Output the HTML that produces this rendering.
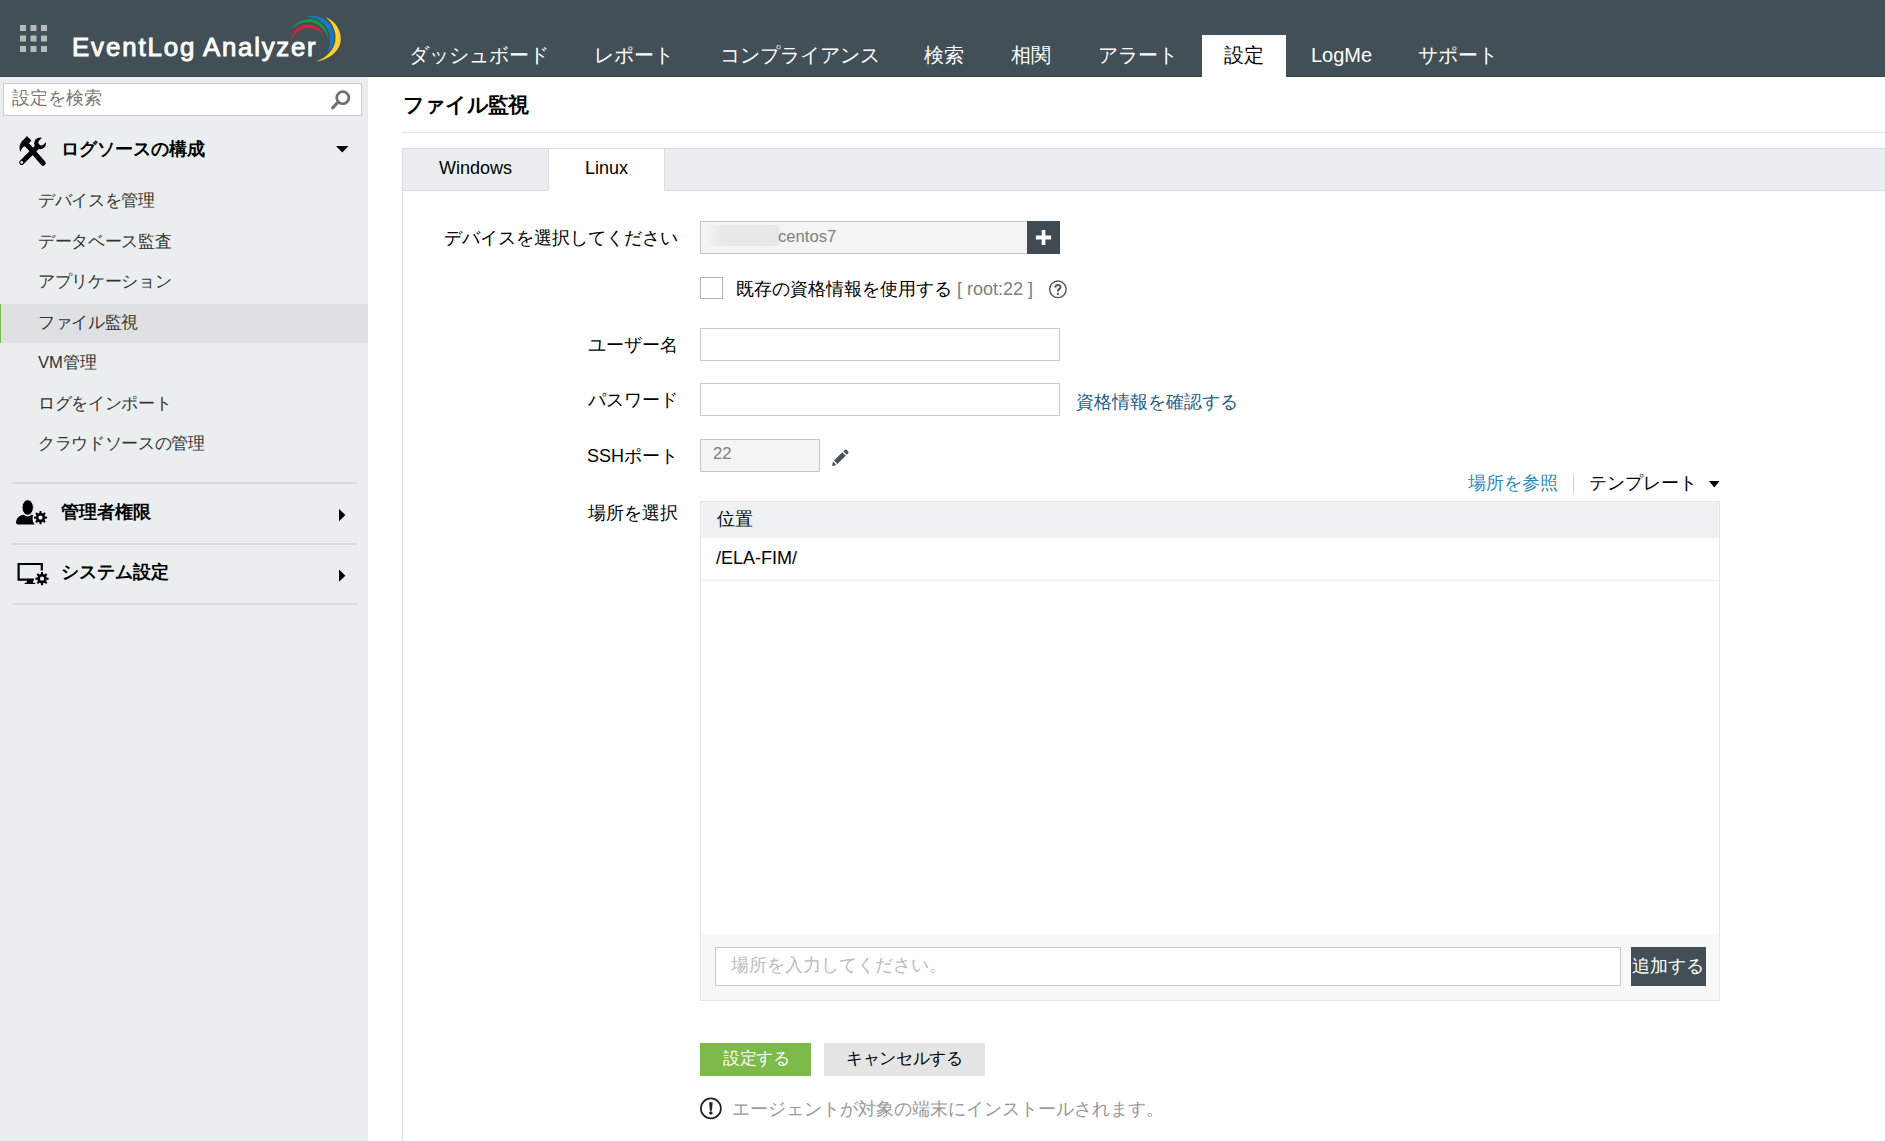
<!DOCTYPE html>
<html lang="ja">
<head>
<meta charset="utf-8">
<title>EventLog Analyzer</title>
<style>
*{box-sizing:border-box;margin:0;padding:0}
html,body{width:1885px;height:1141px;overflow:hidden;background:#fff}
body{position:relative;font-family:"Liberation Sans",sans-serif;color:#000;font-size:18px}
.a{position:absolute}
.t{position:absolute;white-space:nowrap;line-height:24px;height:24px}
.r{text-align:right}
/* header */
#hdr{left:0;top:0;width:1885px;height:77px;background:#424f56;border-bottom:1px solid #38474e}
.nav{color:#fff;font-size:20px;top:43px}
#act{left:1202px;top:35px;width:84px;height:42px;background:#fff}
.lg{top:31px;font-size:25.8px;font-weight:normal;color:#fff;line-height:32px;height:32px;-webkit-text-stroke:0.95px #fff}
/* sidebar */
#side{left:0;top:77px;width:368px;height:1064px;background:#ebeeef}
#srch{left:3px;top:83px;width:359px;height:33px;background:#fff;border:1px solid #ccc}
.sh{font-weight:bold;font-size:18px;color:#000;left:61px}
.si{font-size:16.67px;letter-spacing:-0.33px;color:#333;left:38px}
#sel{left:0;top:304px;width:368px;height:39px;background:#dfe0e2;border-left:1px solid #74b84f}
.hr{left:12px;width:345px;height:2px;background:#d8dbdd}
/* main */
#vline{left:402px;top:148px;width:1px;height:993px;background:#d9dee1}
#tline{left:402px;top:132px;width:1483px;height:1px;background:#e2e4e6}
#tabs{left:402px;top:148px;width:1483px;height:43px;background:#ebeeef;border:1px solid #d9dddf;border-right:0}
#tabL{left:548px;top:148px;width:117px;height:43px;background:#fff;border:1px solid #d9dddf;border-bottom:0}
#tabW{left:548px;top:149px;width:1px;height:41px;background:#d9dddf}
.lbl{font-size:18px;color:#000;left:378px;width:300px;text-align:right}
.inp{background:#fff;border:1px solid #c8c8c8}
.dis{background:#f4f4f4;border:1px solid #c6c6c6}
.g{color:#808080}
</style>
</head>
<body>
<!-- HEADER -->
<div id="hdr" class="a"></div>
<div id="act" class="a"></div>
<div class="t lg" id="lg1" style="left:72px;letter-spacing:1.9px">EventLog</div>
<div class="t lg" id="lg2" style="left:203px;letter-spacing:1.75px">Analyzer</div>
<div class="t nav" style="left:409px">ダッシュボード</div>
<div class="t nav" style="left:594px">レポート</div>
<div class="t nav" style="left:720px">コンプライアンス</div>
<div class="t nav" style="left:924px">検索</div>
<div class="t nav" style="left:1011px">相関</div>
<div class="t nav" style="left:1098px">アラート</div>
<div class="t nav" style="left:1224px;color:#000">設定</div>
<div class="t nav" style="left:1311px">LogMe</div>
<div class="t nav" style="left:1418px">サポート</div>

<!-- SIDEBAR -->
<div id="side" class="a"></div>
<div id="srch" class="a"></div>
<div class="t" style="left:12px;top:86px;font-size:18px;color:#777">設定を検索</div>
<div class="t sh" style="top:137px">ログソースの構成</div>
<div id="sel" class="a"></div>
<div class="t si" style="top:189px">デバイスを管理</div>
<div class="t si" style="top:230px">データベース監査</div>
<div class="t si" style="top:270px">アプリケーション</div>
<div class="t si" style="top:311px">ファイル監視</div>
<div class="t si" style="top:351px"><span style="letter-spacing:0">VM</span>管理</div>
<div class="t si" style="top:392px">ログをインポート</div>
<div class="t si" style="top:432px">クラウドソースの管理</div>
<div class="a hr" style="top:482px"></div>
<div class="t sh" style="top:500px">管理者権限</div>
<div class="a hr" style="top:543px"></div>
<div class="t sh" style="top:560px">システム設定</div>
<div class="a hr" style="top:603px"></div>

<!-- MAIN -->
<div class="t" style="left:403px;top:93px;font-size:20.83px;letter-spacing:-0.83px;font-weight:bold;color:#000">ファイル監視</div>
<div id="tline" class="a"></div>
<div id="vline" class="a"></div>
<div id="tabs" class="a"></div>
<div id="tabL" class="a"></div>
<div class="t" style="left:439px;top:156px;font-size:18px;color:#000">Windows</div>
<div class="t" style="left:585px;top:156px;font-size:18px;color:#000">Linux</div>

<div class="t lbl" style="top:226px">デバイスを選択してください</div>
<div class="a dis" style="left:700px;top:221px;width:328px;height:33px"></div>
<div class="a" style="left:705px;top:225px;width:74px;height:21px;background:linear-gradient(90deg,rgba(232,232,232,0) 0%,#e9e9e9 22%,#e8e8e8 100%)"></div>
<div class="t g" style="left:778px;top:225px;font-size:16.67px">centos7</div>
<div class="a" style="left:1027px;top:221px;width:33px;height:33px;background:#3f4a52"></div>

<div class="a inp" style="left:700px;top:277px;width:23px;height:22px;border-color:#b2b2b2"></div>
<div class="t" style="left:736px;top:277px;font-size:18px;color:#000">既存の資格情報を使用する</div>
<div class="t g" style="left:957px;top:277px;font-size:18px">[ root:22 ]</div>

<div class="t lbl" style="top:333px">ユーザー名</div>
<div class="a inp" style="left:700px;top:328px;width:360px;height:33px"></div>
<div class="t lbl" style="top:388px">パスワード</div>
<div class="a inp" style="left:700px;top:383px;width:360px;height:33px"></div>
<div class="t" style="left:1076px;top:390px;font-size:18px;color:#1f5d88">資格情報を確認する</div>
<div class="t lbl" style="top:444px">SSHポート</div>
<div class="a dis" style="left:700px;top:439px;width:120px;height:33px"></div>
<div class="t g" style="left:713px;top:442px;font-size:16.67px">22</div>

<div class="t" style="left:1468px;top:471px;font-size:18px;color:#2a8abf">場所を参照</div>
<div class="a" style="left:1573px;top:475px;width:1px;height:18px;background:#d0d0d0"></div>
<div class="t" style="left:1589px;top:471px;font-size:18px;color:#000">テンプレート</div>

<div class="t lbl" style="top:501px">場所を選択</div>
<!-- table -->
<div class="a" style="left:700px;top:501px;width:1020px;height:500px;border:1px solid #e7e7e7;background:#fff"></div>
<div class="a" style="left:701px;top:502px;width:1018px;height:36px;background:#eff2f3"></div>
<div class="t" style="left:717px;top:507px;font-size:18px;color:#000">位置</div>
<div class="t" style="left:716px;top:546px;font-size:18px;color:#000">/ELA-FIM/</div>
<div class="a" style="left:701px;top:580px;width:1018px;height:1px;background:#e9ebec"></div>
<div class="a" style="left:701px;top:934px;width:1018px;height:66px;background:#f8f8f8"></div>
<div class="a inp" style="left:715px;top:947px;width:906px;height:39px"></div>
<div class="t" style="left:731px;top:953px;font-size:18px;color:#bbb">場所を入力してください。</div>
<div class="a" style="left:1631px;top:947px;width:75px;height:39px;background:#434e56"></div>
<div class="t" style="left:1631px;top:954px;font-size:18px;color:#fff;width:73px;text-align:center">追加する</div>

<div class="a" style="left:700px;top:1043px;width:111px;height:33px;background:#7dba4a"></div>
<div class="t" style="left:701px;top:1047px;width:111px;text-align:center;font-size:16.67px;letter-spacing:-0.33px;color:#fff">設定する</div>
<div class="a" style="left:824px;top:1043px;width:161px;height:33px;background:#e5e5e5"></div>
<div class="t" style="left:824px;top:1047px;width:161px;text-align:center;font-size:16.67px;letter-spacing:-0.33px;color:#000">キャンセルする</div>
<div class="t" style="left:732px;top:1097px;font-size:18px;color:#999">エージェントが対象の端末にインストールされます。</div>

<!-- ICONS (page coordinates) -->
<svg class="a" style="left:0;top:0" width="1885" height="1141" viewBox="0 0 1885 1141">
<!-- grid -->
<g fill="#b5babd">
<rect x="20" y="25" width="6" height="6"/><rect x="30.5" y="25" width="6" height="6"/><rect x="41" y="25" width="6" height="6"/>
<rect x="20" y="35.5" width="6" height="6"/><rect x="30.5" y="35.5" width="6" height="6"/><rect x="41" y="35.5" width="6" height="6"/>
<rect x="20" y="46" width="6" height="6"/><rect x="30.5" y="46" width="6" height="6"/><rect x="41" y="46" width="6" height="6"/>
</g>
<!-- logo swoosh -->
<path fill="#fdd131" d="M325.5,17 C338,22 342,34 340.5,42 C339,52 328,60 316,61.7 C326,58 334,50 335.3,41 C336.5,32 333,23 325.5,17Z"/>
<path fill="#1b78b9" d="M306,16.8 C314,14.5 322,16.5 327.5,21.5 C333,26.5 335.5,33 334,41 C333,46 331,49.5 327.5,52 C330,47 330.5,40 329.5,35 C328,28 323,21.5 316,18.8 C313,17.5 309.5,16.8 306,16.8Z"/>
<path fill="#179a49" d="M291.4,29.5 C296,22 304,18.7 311,19 C320,19.5 328,28 328.7,39.7 C326,31 320,24 311,22.3 C303,21 296.5,24 291.4,29.5Z"/>
<path fill="#d8213a" d="M290.8,40.3 C292,31 299,24.5 308,24.4 C315.5,24.5 321,29 323.8,34.9 C319.5,30.5 314,28 308,28 C300.5,28 294.5,32.5 290.8,40.3Z"/>
<!-- search -->
<g fill="none" stroke="#707070" stroke-linecap="round"><circle cx="342.8" cy="97.7" r="6.05" stroke-width="2.7"/><path d="M337.6,102.6 L332.6,107.9" stroke-width="3"/></g>
<!-- tools -->
<g fill="#000" stroke="none">
<path d="M26.9,136 L31.3,140.5 L30.1,142.2 L28.2,143.2 L29.8,145 L26.6,148 L24.8,146.2 C22.6,146.8 21.2,149 20.4,152 C18.3,146.5 20.5,142 23.8,139.4Z"/>
</g>
<g fill="none" stroke="#000">
<path d="M27.8,145.6 L43.2,163.2" stroke-width="5.1" stroke-linecap="round"/>
<path d="M21.7,162.4 L37.8,146.4" stroke-width="5" stroke-linecap="round"/>
</g>
<circle cx="40.06" cy="143.4" r="5.9" fill="#000"/>
<g transform="translate(41.4,142.5) rotate(-45)" fill="#ebeeef"><circle cx="0" cy="0" r="2.9"/><rect x="0" y="-2.9" width="8" height="5.8"/></g>
<circle cx="21.7" cy="162.4" r="1.4" fill="#ebeeef"/>
<!-- arrows -->
<path d="M336,146 H348.5 L342.25,152.4Z" fill="#000"/>
<path d="M339,509 L345.4,515.1 L339,521.2Z" fill="#000"/>
<path d="M339,569.6 L345.4,575.7 L339,581.8Z" fill="#000"/>
<!-- user + gear -->
<path fill="#000" d="M16,522.3 C16.6,518 19.6,515.3 23.6,514.8 Q27.7,518.4 31.8,514.8 L33.2,515 C32,518 32.4,521.6 34.6,524.4 L17.8,524.4 Q16,524.4 16,522.3Z"/>
<ellipse cx="27.7" cy="507.5" rx="5.7" ry="7.8" fill="#000" stroke="#ebeeef" stroke-width="1"/>
<path fill="#000" fill-rule="evenodd" d="M39.37,513.04 L39.57,511.07 L41.43,511.07 L41.63,513.04 L42.92,513.57 L44.46,512.32 L45.78,513.64 L44.53,515.18 L45.06,516.47 L47.03,516.67 L47.03,518.53 L45.06,518.73 L44.53,520.02 L45.78,521.56 L44.46,522.88 L42.92,521.63 L41.63,522.16 L41.43,524.13 L39.57,524.13 L39.37,522.16 L38.08,521.63 L36.54,522.88 L35.22,521.56 L36.47,520.02 L35.94,518.73 L33.97,518.53 L33.97,516.67 L35.94,516.47 L36.47,515.18 L35.22,513.64 L36.54,512.32 L38.08,513.57Z M38.40,517.60 a2.10,2.10 0 1 0 4.20,0 a2.10,2.10 0 1 0 -4.20,0Z"/>
<!-- monitor + gear -->
<path fill="none" stroke="#000" stroke-width="2.2" d="M41.8,570.6 V564 H18.6 V579.6 H33.9"/>
<path fill="#000" d="M26.9,580 H33 V582.7 H35.2 V583.9 H24.7 V582.9 L26.9,582.2Z"/>
<path fill="#000" fill-rule="evenodd" d="M40.84,574.04 L41.06,572.07 L42.94,572.07 L43.16,574.04 L44.48,574.59 L46.02,573.34 L47.36,574.68 L46.11,576.22 L46.66,577.54 L48.63,577.76 L48.63,579.64 L46.66,579.86 L46.11,581.18 L47.36,582.72 L46.02,584.06 L44.48,582.81 L43.16,583.36 L42.94,585.33 L41.06,585.33 L40.84,583.36 L39.52,582.81 L37.98,584.06 L36.64,582.72 L37.89,581.18 L37.34,579.86 L35.37,579.64 L35.37,577.76 L37.34,577.54 L37.89,576.22 L36.64,574.68 L37.98,573.34 L39.52,574.59Z M39.90,578.70 a2.10,2.10 0 1 0 4.20,0 a2.10,2.10 0 1 0 -4.20,0Z"/>
<!-- plus -->
<path fill="#fff" d="M1035.9,235.6 H1051.1 V239.4 H1035.9Z M1041.7,230 H1045.4 V245 H1041.7Z"/>
<!-- help -->
<circle cx="1057.9" cy="289.3" r="8.3" fill="none" stroke="#555" stroke-width="1.4"/>
<path fill="none" stroke="#555" stroke-width="2" d="M1055.3,287.4 C1055.3,284.3 1060.5,284.3 1060.5,287.1 C1060.5,289.1 1057.9,289.2 1057.9,291.4"/>
<circle cx="1057.9" cy="293.9" r="1.15" fill="#555"/>
<!-- pencil -->
<g transform="translate(832,466) rotate(-45)" fill="#47555d">
<path d="M0,0 L3.9,-2.45 V2.45Z"/>
<rect x="5.2" y="-2.45" width="11.8" height="4.9"/>
<path d="M18.3,-2.45 H20.2 Q21.8,-2.45 21.8,-0.9 V0.9 Q21.8,2.45 20.2,2.45 H18.3Z"/>
</g>
<!-- template arrow -->
<path d="M1709,481 H1719.6 L1714.3,487.6Z" fill="#000"/>
<!-- info -->
<circle cx="710.9" cy="1108.4" r="10" fill="none" stroke="#222" stroke-width="1.7"/>
<path fill="#222" d="M709.1,1102.3 H712.7 L711.9,1110.7 H709.9Z"/>
<circle cx="710.9" cy="1113.1" r="1.75" fill="#222"/>
</svg>
</body>
</html>
